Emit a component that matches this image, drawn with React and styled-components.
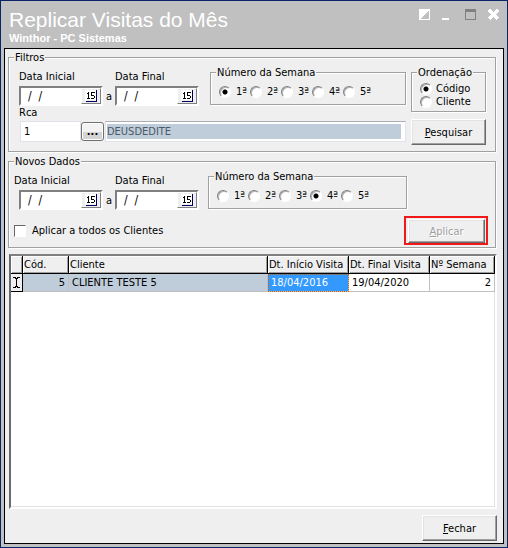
import { useState } from 'react';
import styled, { createGlobalStyle, css } from 'styled-components';

const GlobalStyle = createGlobalStyle`
  * {
    box-sizing: border-box;
  }
  body {
    margin: 0;
  }
  body, input, button {
    font-family: 'DejaVu Sans Condensed', Tahoma, sans-serif;
    font-size: 11px;
    line-height: 13px;
    color: #000;
  }
`;

const Window = styled.div`
  display: flex;
  flex-direction: column;
  min-height: 100vh;
  padding: 0 3px 3px;
  border: 1px solid #0a246a;
  background: #c0c0c0;
`;

const TitleBar = styled.header`
  display: flex;
  justify-content: space-between;
  height: 47px;
  padding: 7px 5px 0;
  color: #fff;
  font-family: 'Liberation Sans', Arial, sans-serif;
`;

const Title = styled.h1`
  margin: 0;
  font-size: 21px;
  line-height: 23px;
  font-weight: normal;
`;

const Subtitle = styled.div`
  font-size: 11px;
  line-height: 14px;
  font-weight: bold;
`;

const WindowButtons = styled.div`
  display: flex;
  gap: 12px;
  height: 12px;
`;

const WindowButton = styled.button`
  width: 11px;
  height: 12px;
  padding: 0;
  border: none;
  background: transparent;

  svg {
    display: block;
  }
`;

const Panel = styled.main`
  flex: 1;
  display: flex;
  flex-direction: column;
  padding: 2px 6px 2px 3px;
  border: 1px solid #000;
  background: #efefef;
`;

const Group = styled.fieldset`
  min-width: 0;
  margin: 0;
  padding: ${props => props.$padding};
  border: 1px solid #a0a0a0;
  box-shadow: 1px 1px 0 #fff, inset 1px 1px 0 #fff;
`;

const Legend = styled.legend`
  margin-left: ${props => props.$inset}px;
  padding: 0 1px;
  background: #efefef;
`;

const FilterGroup = styled(Group)`
  margin-right: 1px;
`;

const NewDataGroup = styled(Group)`
  margin: 3px 1px 6px 0;
`;

const Columns = styled.div`
  display: flex;
  gap: 5px;
`;

const Main = styled.div`
  flex: 1;
  min-width: 0;
`;

const Side = styled.div`
  display: flex;
  flex-direction: column;
  gap: 7px;
  width: 75px;
`;

const TopRow = styled.div`
  display: flex;
  align-items: flex-start;
  margin-right: ${props => props.$right || 0}px;
`;

const DateField = styled.div`
  padding-top: 4px;
`;

const Label = styled.label`
  display: block;
`;

const DateBox = styled.div`
  display: flex;
  width: 84px;
  height: 20px;
  margin-top: 3px;
  margin-left: ${props => props.$indent || 0}px;
  border: 2px solid;
  border-color: #808080 #fff #fff #808080;
  background: #fff;
`;

const DateInput = styled.input`
  flex: 1;
  min-width: 0;
  padding: 0 0 0 7px;
  border: none;
  outline: none;
  background: transparent;
  font-size: 12px;
  white-space: pre;
`;

const CalendarButton = styled.button`
  display: flex;
  align-items: center;
  justify-content: center;
  width: 20px;
  padding: 0;
  border: 1px solid;
  border-color: #fff #808080 #808080 #fff;
  background: #efefef;
`;

const Until = styled.span`
  width: 12px;
  margin-top: 24px;
  text-align: center;
`;

const WeekGroup = styled(Group)`
  flex: 1;
  height: 39px;
  margin-left: ${props => props.$left}px;
`;

const WeekRow = styled.div`
  display: flex;
`;

const WeekOption = styled.label`
  display: flex;
  align-items: center;
  gap: 5px;
  width: 31px;
  white-space: nowrap;
`;

const OrderOption = styled.label`
  display: flex;
  align-items: center;
  gap: 4px;
  height: 13px;
`;

const Radio = styled.input`
  appearance: none;
  flex: none;
  width: 12px;
  height: 12px;
  margin: 0;
  border: 1px solid;
  border-color: #808080 #fff #fff #808080;
  border-radius: 50%;
  background: #fff;
  box-shadow: inset 1px 1px 0 #b0b0b0;

  &:checked {
    background: radial-gradient(circle at 5px 5px, #000 2px, #fff 3px);
  }
`;

const RcaRow = styled.div`
  display: flex;
  align-items: center;
  height: 21px;
  margin-top: 2px;
`;

const fieldBox = css`
  height: 21px;
  border: 1px solid #e2e3ea;
  border-top-color: #abadb3;
  background: #fff;
`;

const RcaInput = styled.input`
  ${fieldBox}
  width: 61px;
  margin-left: 1px;
  padding: 0 3px;
  border-top-color: #e2e3ea;
`;

const BrowseButton = styled.button`
  width: 23px;
  height: 19px;
  margin-right: 1px;
  padding: 0;
  border: 1px solid #707070;
  border-radius: 3px;
  background: linear-gradient(#f2f2f2 50%, #d4d4d4 50%);
  box-shadow: inset 0 0 0 1px #fff;
  font-weight: bold;
`;

const NameFrame = styled.div`
  ${fieldBox}
  flex: 1;
  min-width: 0;
  padding: 2px 4px 2px 1px;
`;

const NameInput = styled.input`
  display: block;
  width: 100%;
  height: 15px;
  padding: 0;
  border: none;
  background: #bfccd9;
  color: #4c5866;
`;

const Button = styled.button`
  width: ${props => props.$width || 75}px;
  height: 26px;
  padding: 0;
  border: 1px solid;
  border-color: #fff #696969 #696969 #fff;
  background: #efefef;
  box-shadow: inset -1px -1px 0 #a0a0a0, inset 1px 1px 0 #e3e3e3;

  &:disabled {
    color: #a0a0a0;
    text-shadow: 1px 1px 0 #fff;
  }
`;

const ActionRow = styled.div`
  display: flex;
  align-items: center;
  justify-content: space-between;
  margin-top: 6px;
  padding-right: 6px;
`;

const CheckLabel = styled.label`
  display: flex;
  align-items: center;
  gap: 6px;
`;

const Checkbox = styled.input`
  appearance: none;
  width: 12px;
  height: 12px;
  margin: 0;
  border: 1px solid;
  border-color: #696969 #fff #fff #696969;
  background: #fff;

  &:checked {
    background: linear-gradient(#000, #000) center / 6px 6px no-repeat #fff;
  }
`;

const Highlight = styled.div`
  display: flex;
  padding: 1px 1px 0 2px;
  height: 29px;
  border: 2px solid #f01818;
  background: #efefef;

  button {
    height: 24px;
  }
`;

const Grid = styled.div`
  flex: 1;
  margin-left: 1px;
  border: 2px solid;
  border-color: #808080 #fff #fff #696969;
  background: #fff;
  box-shadow: inset -1px -1px 0 #e3e3e3;
`;

const Table = styled.table`
  width: 100%;
  border-collapse: separate;
  border-spacing: 0;
  table-layout: fixed;
`;

const Th = styled.th`
  width: ${props => (props.$width ? `${props.$width}px` : 'auto')};
  height: 18px;
  padding: 0 0 0 1px;
  border-right: 1px solid #000;
  border-bottom: 1px solid #000;
  background: #efefef;
  box-shadow: inset 1px 1px 0 #fff, inset -1px -1px 0 #a0a0a0;
  font-weight: normal;
  text-align: left;
  white-space: nowrap;
`;

const Td = styled.td`
  height: 18px;
  padding: 0 3px;
  border-right: 1px solid #c0c0c0;
  border-bottom: 1px solid #c0c0c0;
  text-align: ${props => props.$align || 'left'};
  background: ${props => (props.$marked ? '#bfccd9' : '#fff')};

  ${props => props.$selected && css`
    background: #3399ff;
    color: #fff;
    outline: 1px dotted #c06000;
    outline-offset: -1px;
  `}
`;

const Indicator = styled.td`
  padding: 0;
  border-right: 1px solid #000;
  border-bottom: 1px solid #000;
  background: #efefef;

  svg {
    display: block;
    margin: 0 auto;
  }
`;

const Footer = styled.footer`
  display: flex;
  justify-content: flex-end;
  padding-top: 6px;
`;

const CalendarIcon = () => (
  <svg width="14" height="14" viewBox="0 0 14 14" shapeRendering="crispEdges">
    <path d="M1 1h11v10H1z" fill="#fff" />
    <path d="M12 1h1v12H2v-1h10z" fill="#000060" />
    <path d="M4 3h1v6h1v1H3V9h1V5H3V4h1z" />
    <path d="M7 3h4v1H8v2h2v1h1v2h-1v1H7V9h3V7H7z" />
  </svg>
);

const DateControl = ({ id, label, indent }) => {
  const [value, setValue] = useState('/  /');

  return (
    <DateField>
      <Label htmlFor={id}>{label}</Label>
      <DateBox $indent={indent}>
        <DateInput id={id} value={value} onChange={e => setValue(e.target.value)} />
        <CalendarButton type="button" aria-label={`Calendário ${label}`}>
          <CalendarIcon />
        </CalendarButton>
      </DateBox>
    </DateField>
  );
};

const weeks = ['1ª', '2ª', '3ª', '4ª', '5ª'];

const WeekPicker = ({ name, initial, left }) => (
  <WeekGroup $left={left} $padding="6px 8px 0">
    <Legend $inset={-3}>Número da Semana</Legend>
    <WeekRow>
      {weeks.map(week => (
        <WeekOption key={week}>
          <Radio type="radio" name={name} defaultChecked={week === initial} />
          {week}
        </WeekOption>
      ))}
    </WeekRow>
  </WeekGroup>
);

const App = () => {
  const [rca, setRca] = useState('1');

  return (
    <>
      <GlobalStyle />
      <Window>
        <TitleBar>
          <div>
            <Title>Replicar Visitas do Mês</Title>
            <Subtitle>Winthor - PC Sistemas</Subtitle>
          </div>
          <WindowButtons>
            <WindowButton type="button" aria-label="Recolher">
              <svg width="11" height="12" shapeRendering="crispEdges">
                <path d="M0 1h11v11H0z" fill="#fff" />
                <path d="M10 2v9H2v-1h1v-1h1v-1h1v-1h1v-1h1v-1h1v-1h1v-1h1V2z" fill="#c0c0c0" />
              </svg>
            </WindowButton>
            <WindowButton type="button" aria-label="Minimizar">
              <svg width="11" height="12" shapeRendering="crispEdges">
                <path d="M0 10h7v2H0z" fill="#fff" />
              </svg>
            </WindowButton>
            <WindowButton type="button" aria-label="Maximizar" disabled>
              <svg width="11" height="12" shapeRendering="crispEdges">
                <path d="M0 1h11v11H0zM1 4v7h9V4z" fill="#808080" fillRule="evenodd" />
              </svg>
            </WindowButton>
            <WindowButton type="button" aria-label="Fechar janela">
              <svg width="11" height="12" shapeRendering="crispEdges">
                <path d="M1 2l9 9M10 2l-9 9" stroke="#fff" strokeWidth="3" />
              </svg>
            </WindowButton>
          </WindowButtons>
        </TitleBar>

        <Panel>
          <FilterGroup $padding="2px 9px 6px 10px">
            <Legend $inset={-5}>Filtros</Legend>
            <Columns>
              <Main>
                <TopRow>
                  <DateControl id="filtro-inicial" label="Data Inicial" />
                  <Until>a</Until>
                  <DateControl id="filtro-final" label="Data Final" />
                  <WeekPicker name="semana-filtro" initial="1ª" left={11} />
                </TopRow>
                <Label htmlFor="rca">Rca</Label>
                <RcaRow>
                  <RcaInput id="rca" value={rca} onChange={e => setRca(e.target.value)} />
                  <BrowseButton type="button" aria-label="Procurar Rca">...</BrowseButton>
                  <NameFrame>
                    <NameInput aria-label="Nome do Rca" value="DEUSDEDITE" readOnly />
                  </NameFrame>
                </RcaRow>
              </Main>
              <Side>
                <Group $padding="3px 8px">
                  <Legend $inset={-3}>Ordenação</Legend>
                  <OrderOption>
                    <Radio type="radio" name="ordenacao" defaultChecked />
                    Código
                  </OrderOption>
                  <OrderOption>
                    <Radio type="radio" name="ordenacao" />
                    Cliente
                  </OrderOption>
                </Group>
                <Button type="button"><u>P</u>esquisar</Button>
              </Side>
            </Columns>
          </FilterGroup>

          <NewDataGroup $padding="2px 1px 2px 5px">
            <Legend $inset={0}>Novos Dados</Legend>
            <TopRow $right={87}>
              <DateControl id="novo-inicial" label="Data Inicial" indent={5} />
              <Until>a</Until>
              <DateControl id="novo-final" label="Data Final" />
              <WeekPicker name="semana-nova" initial="4ª" left={9} />
            </TopRow>
            <ActionRow>
              <CheckLabel>
                <Checkbox type="checkbox" />
                Aplicar a todos os Clientes
              </CheckLabel>
              <Highlight>
                <Button type="button" $width={77} disabled><u>A</u>plicar</Button>
              </Highlight>
            </ActionRow>
          </NewDataGroup>

          <Grid>
            <Table>
              <thead>
                <tr>
                  <Th $width={12} aria-label="Linha atual" />
                  <Th $width={46}>Cód.</Th>
                  <Th>Cliente</Th>
                  <Th $width={81}>Dt. Início Visita</Th>
                  <Th $width={81}>Dt. Final Visita</Th>
                  <Th $width={65}>Nº Semana</Th>
                </tr>
              </thead>
              <tbody>
                <tr>
                  <Indicator>
                    <svg width="7" height="13" shapeRendering="crispEdges">
                      <path d="M0 1h3v1h1V1h3v1H5v1H4v7h1v1h2v1H4v-1H3v1H0v-1h2v-1h1V3H2V2H0z" />
                    </svg>
                  </Indicator>
                  <Td $align="right" $marked>5</Td>
                  <Td $marked>CLIENTE TESTE 5</Td>
                  <Td $selected>18/04/2016</Td>
                  <Td>19/04/2020</Td>
                  <Td $align="right">2</Td>
                </tr>
              </tbody>
            </Table>
          </Grid>

          <Footer>
            <Button type="button"><u>F</u>echar</Button>
          </Footer>
        </Panel>
      </Window>
    </>
  );
};

export default App;
